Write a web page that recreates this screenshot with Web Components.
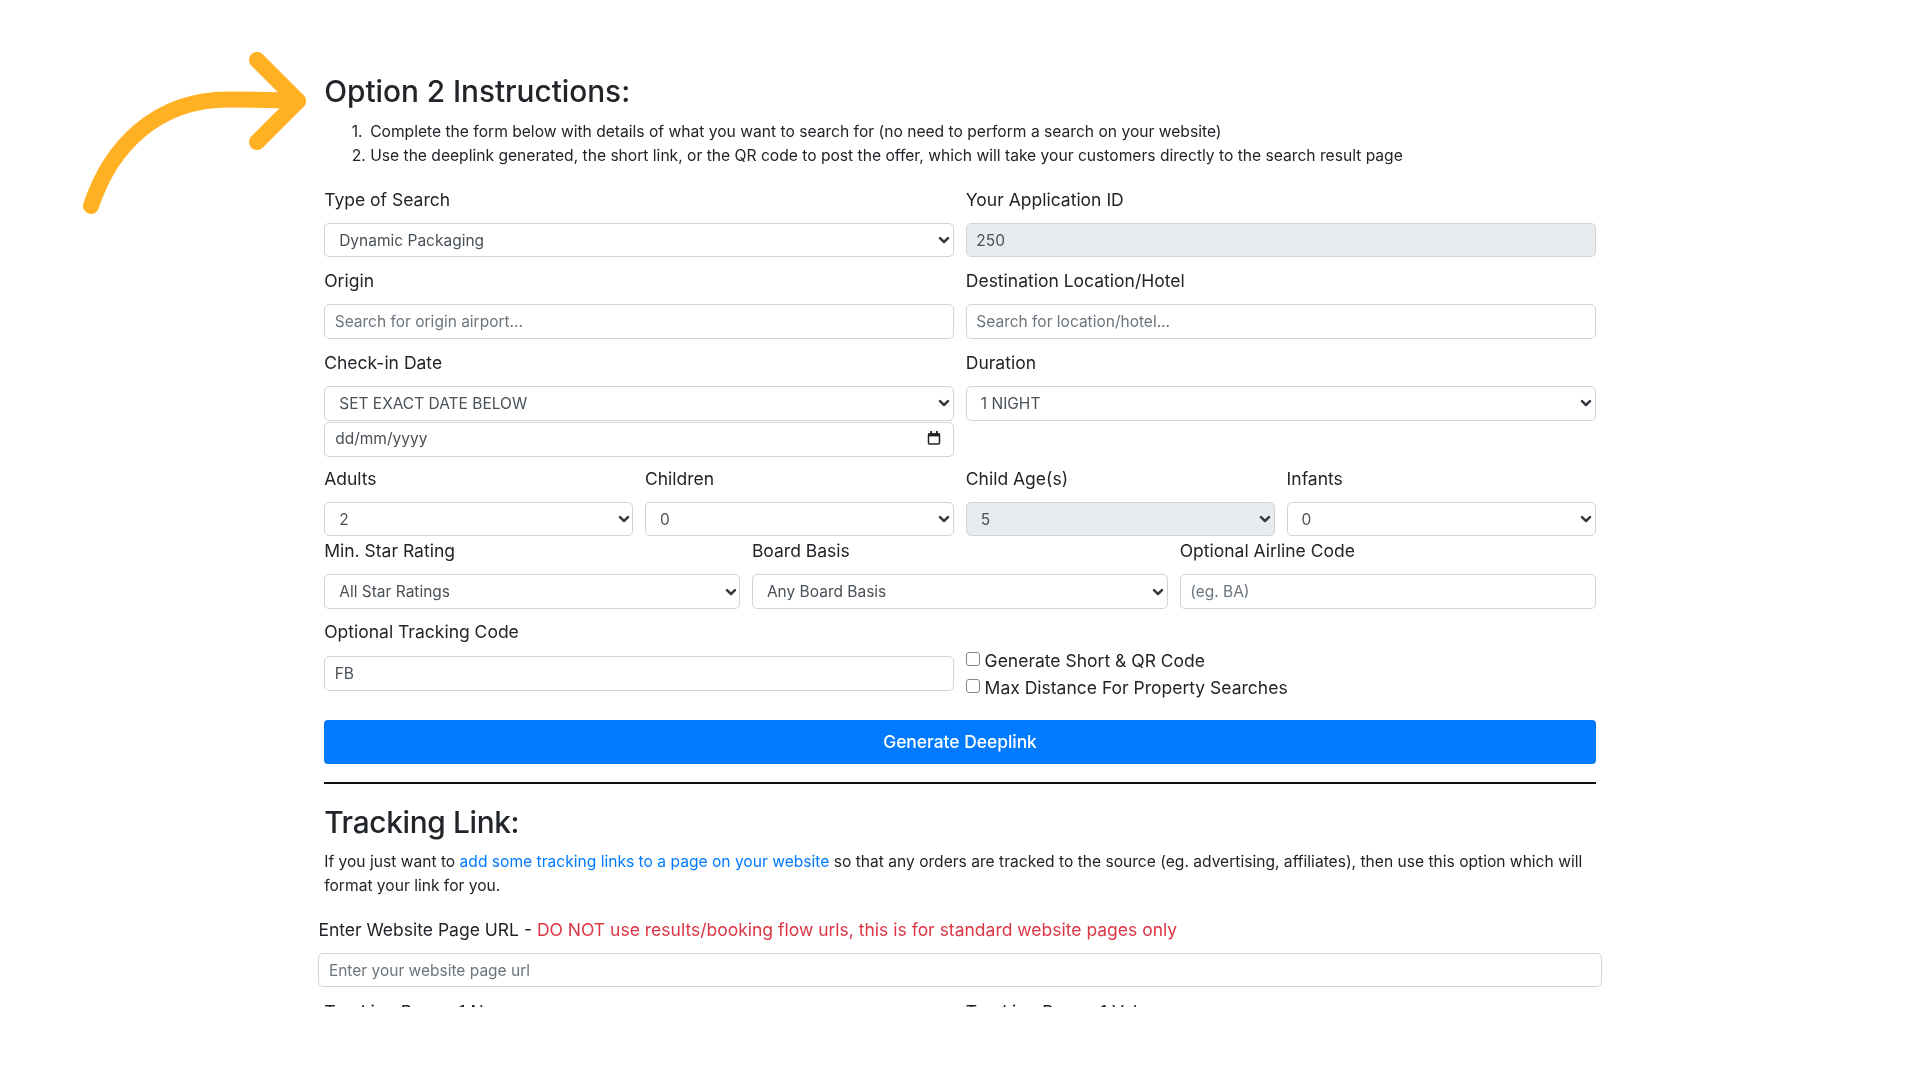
<!DOCTYPE html>
<html lang="en"><head><meta charset="utf-8"><title>Option 2 Instructions</title>
<style>
html,body{margin:0;background:#fff}
body{font-family:Inter,"Liberation Sans",sans-serif;color:#212529;font-size:17.5px}
</style></head><body>
<deep-page>
<svg slot="art" width="320" height="220" viewBox="0 0 320 220" aria-hidden="true"><g fill="none" stroke="#ffb023" stroke-width="16" stroke-linecap="round" stroke-linejoin="round"><path d="M91 206C110 148 155 99 230 99.5C260 99.7 280 100 298 101"/><path d="M257 60L298 101L257 142"/></g></svg>
<section-title style="letter-spacing:-.03px">Option 2 Instructions:</section-title>
<step-list><step-item n="1">Complete the form below with details of what you want to search for (no need to perform a search on your website)</step-item><step-item n="2">Use the deeplink generated, the short link, or the QR code to post the offer, which will take your customers directly to the search result page</step-item></step-list>
<form-row cols="2" style="margin-top:17.5px;--lh:27.6px;--lm:9.7px">
<form-field label="Type of Search"><ui-select>Dynamic Packaging</ui-select></form-field>
<form-field label="Your Application ID"><ui-input disabled value>250</ui-input></form-field>
<form-field label="Origin"><ui-input>Search for origin airport...</ui-input></form-field>
<form-field label="Destination Location/Hotel"><ui-input>Search for location/hotel...</ui-input></form-field>
<form-field label="Check-in Date"><ui-select>SET EXACT DATE BELOW</ui-select><ui-date>dd/mm/yyyy</ui-date></form-field>
<form-field label="Duration"><ui-select>1 NIGHT</ui-select></form-field>
</form-row>
<form-row cols="4" style="margin-top:-2.4px">
<form-field tight label="Adults"><ui-select>2</ui-select></form-field>
<form-field tight label="Children"><ui-select>0</ui-select></form-field>
<form-field tight label="Child Age(s)"><ui-select disabled>5</ui-select></form-field>
<form-field tight label="Infants"><ui-select>0</ui-select></form-field>
</form-row>
<form-row cols="3" style="--lm:8.9px;margin-bottom:-1.3px">
<form-field label="Min. Star Rating"><ui-select>All Star Ratings</ui-select></form-field>
<form-field label="Board Basis"><ui-select>Any Board Basis</ui-select></form-field>
<form-field label="Optional Airline Code"><ui-input>(eg. BA)</ui-input></form-field>
</form-row>
<form-row cols="2" style="--lm:9.6px">
<form-field label="Optional Tracking Code"><ui-input value>FB</ui-input></form-field>
<check-group><ui-check>Generate Short &amp; QR Code</ui-check><ui-check>Max Distance For Property Searches</ui-check></check-group>
</form-row>
<ui-button>Generate Deeplink</ui-button>
<section-rule></section-rule>
<section-title second style="letter-spacing:-.33px">Tracking Link:</section-title>
<body-text>If you just want to <a href="#">add some tracking links to a page on your website</a> so that any orders are tracked to the source (eg. advertising, affiliates), then use this option which will<br>format your link for you.</body-text>
<wide-field><span slot="label">Enter Website Page URL - <span style="color:#dc3545">DO NOT use results/booking flow urls, this is for standard website pages only</span></span><ui-input>Enter your website page url</ui-input></wide-field>
<form-row cols="2" style="margin-top:10px">
<form-field label="Tracking Param 1 Name"></form-field>
<form-field label="Tracking Param 1 Value"></form-field>
</form-row>
</deep-page>
<script>
function def(name,css,html,extra){
  customElements.define(name,class extends HTMLElement{
    constructor(){super();const r=this.attachShadow({mode:'open'});r.innerHTML='<style>'+css+'</style>'+(typeof html==='function'?html(this):html);}
    connectedCallback(){if(extra)extra(this)}
  });
}
const chev='<svg width="12" height="12" viewBox="0 0 12 12"><path d="M2 4.2l4 3.8 4-3.8" fill="none" stroke="#343a40" stroke-width="2.5" stroke-linecap="round" stroke-linejoin="round"/></svg>';
const fieldCss=':host{display:flex;align-items:center;box-sizing:border-box;height:34.7px;border:1.2px solid #ced4da;border-radius:5px;background:#fff;color:#495057;font-size:15.5px;white-space:nowrap}';
def('deep-page',':host{display:block;position:relative;box-sizing:border-box;width:1920px;height:1007px;overflow:hidden;padding:72px 324.2px 0;filter:blur(.3px)}::slotted([slot=art]){position:absolute;left:0;top:0}','<slot name="art"></slot><slot></slot>');
def('section-title',':host{display:block;font-size:29.8px;font-weight:500;line-height:38px}:host([second]){margin-top:19.5px}','<slot></slot>');
def('step-list',':host{display:block;margin-top:10px}','<slot></slot>');
def('step-item',':host{display:flex;line-height:24px;font-size:15.62px;padding-left:27.5px;white-space:nowrap}span{width:18.5px;flex:none}',()=>'<span></span><slot></slot>',el=>{el.shadowRoot.querySelector('span').textContent=el.getAttribute('n')+'.'});
def('form-row',':host{display:grid;column-gap:11.6px;grid-template-columns:repeat(2,1fr)}:host([cols="3"]){grid-template-columns:repeat(3,1fr)}:host([cols="4"]){grid-template-columns:repeat(4,1fr)}','<slot></slot>');
def('form-field',':host{display:block;padding-bottom:9.7px}:host([tight]){padding-bottom:0}label{display:block;line-height:var(--lh,29px);margin-bottom:var(--lm,8.3px);font-size:17.5px}',()=>'<label></label><slot></slot>',el=>{el.shadowRoot.querySelector('label').textContent=el.getAttribute('label')});
def('ui-select',fieldCss+':host{justify-content:space-between;padding:0 2.8px 0 14px}:host([disabled]){background:#e9ecef}svg{flex:none}','<span><slot></slot></span>'+chev);
def('ui-input',fieldCss+':host{padding:0 9.5px;color:#6c757d}:host([value]){color:#495057}:host([disabled]){background:#e9ecef;color:#495057}','<slot></slot>');
def('ui-date',fieldCss+':host{justify-content:space-between;padding:0 12.5px 2px 10px;margin-top:1.6px}svg{margin-top:-1.5px}','<span><slot></slot></span><svg width="14" height="15" viewBox="0 0 14 15"><path d="M2.5 4h9a1 1 0 0 1 1 1v8a1 1 0 0 1-1 1h-9a1 1 0 0 1-1-1V5a1 1 0 0 1 1-1z" fill="none" stroke="#222" stroke-width="1.5"/><rect x="1" y="3.4" width="12" height="3" fill="#222"/><rect x="3.2" y="1" width="1.8" height="3" fill="#222"/><rect x="9" y="1" width="1.8" height="3" fill="#222"/></svg>');
def('check-group',':host{display:block;padding-top:29.2px;margin-bottom:-1.9px}','<slot></slot>');
def('ui-check',':host{display:flex;align-items:center;height:27.2px;font-size:17.5px;gap:4.5px;white-space:nowrap;margin-left:.3px}i{display:block;box-sizing:border-box;width:14px;height:14px;border:1.3px solid #858585;border-radius:3px;background:#fff;flex:none;margin-top:-2px}','<i></i><slot></slot>');
def('ui-button',':host{display:flex;align-items:center;justify-content:center;height:43.3px;margin-top:20px;background:#007bff;color:#fff;border-radius:4px;font-size:17.4px;font-weight:500}','<slot></slot>');
def('section-rule',':host{display:block;height:2px;background:#111;margin-top:18px}','');
def('body-text',':host{display:block;margin-top:9px;line-height:24px;font-size:15.6px}::slotted(a){color:#007bff;text-decoration:none}','<slot></slot>');
def('wide-field',':host{display:block;margin:0 -5.8px;padding-top:16.7px}div{line-height:29px;margin-bottom:9px;font-size:17.5px;white-space:nowrap}','<div><slot name="label"></slot></div><slot></slot>');
</script>
</body></html>
